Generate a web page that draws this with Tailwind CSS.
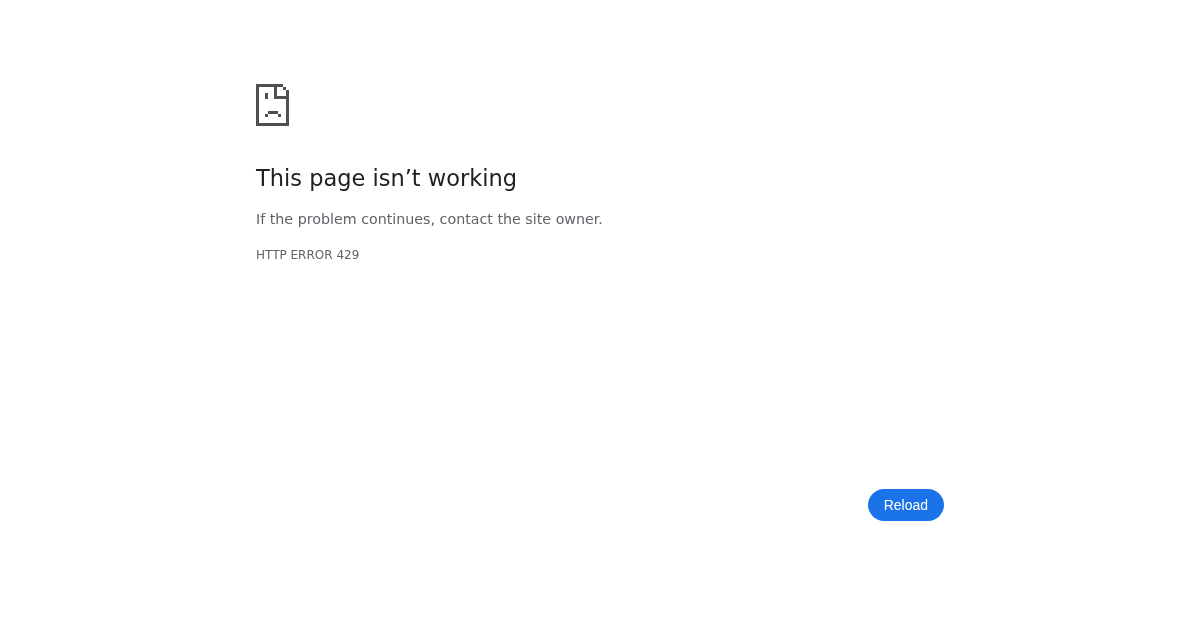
<!DOCTYPE html>
<html lang="en">
<head>
  <meta charset="UTF-8">
  <title>This page isn’t working</title>
  <script src="https://cdn.jsdelivr.net/npm/@tailwindcss/browser@4"></script>
</head>
<body class="bg-white font-['DejaVu_Sans',sans-serif] text-[#5f6368]">
  <div class="mx-auto w-[688px] pt-[84px] will-change-transform">
    <!-- Sad file icon -->
    <svg class="block" width="33" height="42" viewBox="0 0 33 42" shape-rendering="crispEdges" fill="#505050">
      <rect x="0" y="0" width="3" height="42"/>
      <rect x="0" y="39" width="33" height="3"/>
      <rect x="30" y="6" width="3" height="36"/>
      <rect x="0" y="0" width="27" height="3"/>
      <rect x="27" y="3" width="3" height="3"/>
      <rect x="18" y="0" width="3" height="15"/>
      <rect x="18" y="12" width="15" height="3"/>
      <rect x="9" y="9" width="3" height="6"/>
      <rect x="12" y="27" width="10" height="3"/>
      <rect x="9" y="30" width="3" height="3"/>
      <rect x="22" y="30" width="3" height="3"/>
    </svg>

    <h1 class="mt-[37px] text-[22.5px] leading-[30px] font-normal text-[#202124]">This page isn’t working</h1>
    <p class="mt-[15px] text-[14.25px] leading-[22px]">If the problem continues, contact the site owner.</p>
    <div class="mt-[15px] text-xs leading-[20px] uppercase">HTTP ERROR 429</div>

    <div class="mt-[224px] flex justify-end">
      <button class="h-8 rounded-2xl bg-[#1a73e8] px-4 font-['Liberation_Sans',sans-serif] text-sm text-white">Reload</button>
    </div>
  </div>
</body>
</html>
